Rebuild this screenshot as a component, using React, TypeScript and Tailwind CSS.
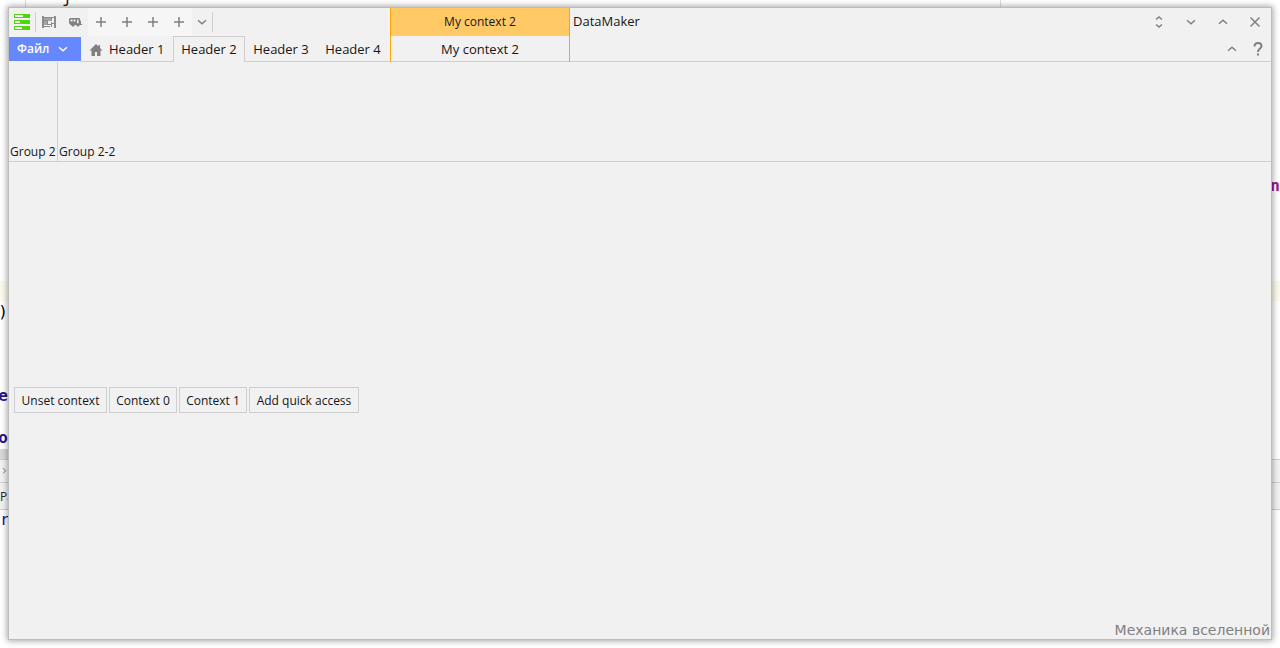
import type { ReactNode } from "react";

const tabs = ["Header 2", "Header 3", "Header 4"];
const actions = [
    { label: "Unset context", width: "w-[93px]" },
    { label: "Context 0", width: "w-[68px]" },
    { label: "Context 1", width: "w-[68px]" },
    { label: "Add quick access", width: "w-[110px]" },
];
const quickSlots = [1, 2, 3, 4];

type IconProps = { d: string; className?: string };

function LineIcon({ d, className = "" }: IconProps) {
    return (
        <svg width="16" height="16" viewBox="0 0 16 16" fill="none" stroke="currentColor" strokeWidth="1.5" className={className}>
            <path d={d} />
        </svg>
    );
}

const DOWN = "M4 6.3 8 9.7 12 6.3";
const UP = "M4 9.7 8 6.3 12 9.7";

function LogoIcon() {
    return (
        <svg width="16" height="16" viewBox="0 0 16 16" shapeRendering="crispEdges">
            <path fill="#4fd60c" d="M0 0h16v4H0zM0 6h16v4H0zM0 12h16v4H0z" />
            <path fill="#f7fff2" d="M1 1h8v2H1zM1 7h5v2H1zM1 13h7v2H1z" />
        </svg>
    );
}

function FenceIcon() {
    return (
        <svg width="16" height="16" viewBox="0 0 16 16" fill="none" stroke="#8c8c8c">
            <path strokeWidth="2" d="M2 2v12M14 2v12" />
            <path fill="#a6a6a6" stroke="none" d="M3 4h8v3H6v4H3z" />
            <path d="M1 3.500h12M3 6.500h4M1 12.500h8M6.500 7v4M10.500 3v4M7 10.500h3M11 9.500h3M10.500 8v5" />
        </svg>
    );
}

function VanIcon() {
    return (
        <svg width="16" height="16" viewBox="0 0 16 16" fill="#808080">
            <path fillRule="evenodd" d="M3 4h9.500L14 8v3H3.500L2 9V5zM3.500 5.500v2h2v-2zM6.500 5.500v2h2v-2zM10 5.500v4h1.500v-4z" />
            <circle cx="6" cy="11" r="1.600" />
            <circle cx="11" cy="11" r="1.600" />
            <path d="M13 10h2v1h-2z" />
        </svg>
    );
}

function IconButton({ label, className, children }: { label: string; className: string; children: ReactNode }) {
    return (
        <button type="button" aria-label={label} className={`flex items-center justify-center text-[#808080] ${className}`}>
            {children}
        </button>
    );
}

function Backdrop() {
    return (
        <div aria-hidden="true" className="absolute inset-0 overflow-hidden bg-white font-['DejaVu_Sans_Mono',monospace] text-base leading-5">
            <div className="flex h-[281px] flex-col">
                <div className="ml-[25px] mr-[279px] flex h-2 items-end border-x border-[#dcdcdc] pl-9">j</div>
                <div className="mt-[168px] text-right font-bold text-[#9b1595]">n</div>
            </div>
            <div className="h-5 bg-[#fcfaed]" />
            <div className="flex h-[148px] w-2 flex-col items-end pt-px">
                <div className="text-black">)</div>
                <div className="mt-16 font-bold text-[#2b1590]">e</div>
                <div className="mt-[22px] font-bold text-[#2b1590]">lo</div>
            </div>
            <div className="h-[10px] w-2 bg-[#d8d8d8]" />
            <div className="h-6 border-y border-[#cfcfcf] bg-[#f2f2f2] text-sm text-[#a0a0a0]">›</div>
            <div className="h-[27px] border-b border-[#cfcfcf] bg-[#f2f2f2] font-['Open_Sans',sans-serif] text-xs leading-7 text-[#222222]">Pa</div>
            <div className="text-[#151590]">r</div>
        </div>
    );
}

function QuickAccess() {
    return (
        <div className="flex h-7 items-center">
            <span className="flex w-[26px] justify-center">
                <LogoIcon />
            </span>
            <span className="h-5 w-px bg-[#cfcfcf]" />
            <IconButton label="Fence" className="h-7 w-[26px]">
                <FenceIcon />
            </IconButton>
            <IconButton label="Van" className="h-7 w-[26px]">
                <VanIcon />
            </IconButton>
            {quickSlots.map((slot) => (
                <IconButton key={slot} label={`Quick access ${slot}`} className="h-7 w-[26px] bg-[#f6f6f6]">
                    <LineIcon d="M8 3v10M3 8h10" />
                </IconButton>
            ))}
            <IconButton label="More" className="h-7 w-5">
                <LineIcon d={DOWN} />
            </IconButton>
            <span className="h-5 w-px bg-[#cfcfcf]" />
        </div>
    );
}

function TabRow() {
    return (
        <nav className="flex h-[26px] text-[13px]">
            <button type="button" className="mt-px flex h-6 w-[72px] items-center bg-[#6688ff] pl-2 text-xs font-semibold text-white">
                Файл
                <LineIcon d={DOWN} className="ml-[6px]" />
            </button>
            <button type="button" className="flex w-[92px] items-center whitespace-nowrap border-b border-[#cfcfcf] pl-2 pt-[2px]">
                <svg width="14" height="16" viewBox="0 0 14 16" fill="#808080" className="mr-[6px]">
                    <path d="M7 2 0.500 8.500h2V14H6v-4h2v4h3.500V8.500h2L11 6V3H9.500v1.500z" />
                </svg>
                Header 1
            </button>
            {tabs.map((tab, index) => (
                <button
                    key={tab}
                    type="button"
                    className={
                        index === 0
                            ? "w-[72px] whitespace-nowrap border-x border-t border-[#cfcfcf] pt-px text-center"
                            : "w-[72px] whitespace-nowrap border-b border-[#cfcfcf] pt-[2px] text-center"
                    }
                >
                    {tab}
                </button>
            ))}
            <span className="w-px border-b border-[#cfcfcf]" />
        </nav>
    );
}

export default function App() {
    return (
        <div className="relative flex min-h-screen px-2 pb-2 pt-[7px] font-['Open_Sans','Noto_Sans',sans-serif] text-xs text-[#161616]">
            <Backdrop />
            <main className="relative flex grow flex-col border border-[#bcbcbc] bg-[#f1f1f1] shadow-[0_0_6px_1px_rgba(0,0,0,0.35)]">
                <header className="flex">
                    <div>
                        <QuickAccess />
                        <TabRow />
                    </div>
                    <div className="flex w-[180px] flex-col border-x border-[#ffa500] text-center">
                        <div className="h-7 bg-[#ffc966] leading-7">My context 2</div>
                        <button type="button" className="h-[26px] border-b border-[#cfcfcf] pt-[2px] text-[13px]">
                            My context 2
                        </button>
                    </div>
                    <div className="flex grow flex-col border-b border-[#cfcfcf]">
                        <div className="flex h-7 items-center justify-between pl-[3px]">
                            <h1 className="text-[13px]">DataMaker</h1>
                            <div className="flex">
                                <IconButton label="Expand" className="h-7 w-8">
                                    <LineIcon d="M5 5.500 8 3l3 2.500M5 10.500 8 13l3-2.500" />
                                </IconButton>
                                <IconButton label="Minimize" className="h-7 w-8">
                                    <LineIcon d={DOWN} />
                                </IconButton>
                                <IconButton label="Maximize" className="h-7 w-8">
                                    <LineIcon d={UP} />
                                </IconButton>
                                <IconButton label="Close" className="h-7 w-8">
                                    <LineIcon d="M3.500 3.500l9 9M12.500 3.500l-9 9" />
                                </IconButton>
                            </div>
                        </div>
                        <div className="flex justify-end">
                            <IconButton label="Collapse ribbon" className="h-[25px] w-[26px]">
                                <LineIcon d={UP} />
                            </IconButton>
                            <IconButton label="Help" className="h-[25px] w-[26px]">
                                <svg width="16" height="16" viewBox="0 0 16 16" fill="none" stroke="currentColor" strokeWidth="2">
                                    <path d="M4.500 5.500C4.500 3 6 2 8 2s3.500 1.200 3.500 3.200C11.500 7.500 8 7.800 8 11M8 12.500v2" />
                                </svg>
                            </IconButton>
                        </div>
                    </div>
                </header>

                <section className="flex h-[100px] items-stretch border-b border-[#cfcfcf]">
                    <div className="flex w-[49px] items-end whitespace-nowrap border-r border-[#cfcfcf] pl-px leading-[18px]">Group 2</div>
                    <div className="flex items-end pl-px leading-[18px]">Group 2-2</div>
                </section>

                <section className="relative flex grow items-center gap-[2px] pb-px pl-[5px]">
                    {actions.map((action) => (
                        <button key={action.label} type="button" className={`h-[26px] whitespace-nowrap border border-[#cfcfcf] pt-px ${action.width}`}>
                            {action.label}
                        </button>
                    ))}
                    <p className="absolute bottom-0 right-0 pr-px font-['DejaVu_Sans',sans-serif] text-sm leading-[18px] text-[#808080]">Механика вселенной</p>
                </section>
            </main>
        </div>
    );
}
